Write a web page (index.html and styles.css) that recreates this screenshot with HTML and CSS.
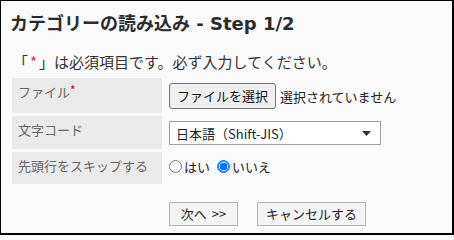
FILE: index.html
```html
<!DOCTYPE html>
<html lang="ja">
<head>
<meta charset="utf-8">
<link rel="stylesheet" href="styles.css">
</head>
<body>
<div class="frame">
  <h1 class="title">カテゴリーの読み込み<span class="latin"> - Step 1/2</span></h1>
  <p class="note">「<span class="req">*</span>」は必須項目です。必ず入力してください。</p>
  <div class="form">
    <div class="label">ファイル<span class="req-label">*</span></div>
    <div class="value">
      <span class="file-btn">ファイルを選択</span>
      <span class="file-status">選択されていません</span>
    </div>
    <div class="label">文字コード</div>
    <div class="value">
      <div class="select">
        <span>日本語（Shift-JIS）</span>
        <svg class="arrow" width="9" height="5" viewBox="0 0 9 5"><path d="M0 0H9L4.5 5Z" fill="#333"/></svg>
      </div>
    </div>
    <div class="label">先頭行をスキップする</div>
    <div class="value radios">
      <label class="radio-item"><span class="radio"></span>はい</label>
      <label class="radio-item"><span class="radio checked"></span>いいえ</label>
    </div>
  </div>
  <div class="actions">
    <span class="btn btn-next">次へ &gt;&gt;</span>
    <span class="btn btn-cancel">キャンセルする</span>
  </div>
</div>
</body>
</html>
```

FILE: styles.css
```css
* { box-sizing: border-box; }
html, body { margin: 0; padding: 0; background: #fafafa; }
body {
  font-family: "Noto Sans CJK JP", "Noto Sans", sans-serif;
  color: #333;
}
.frame {
  width: 454px;
  height: 235px;
  border: 1px solid #000;
  border-right-width: 2px;
  border-bottom-width: 2px;
  background: #fafafa;
  padding: 0 0 0 9px;
  overflow: hidden;
}
.title {
  margin: 8px 0 0 0;
  font-size: 18px;
  line-height: 26px;
  font-weight: bold;
  color: #2b2b2b;
}
.latin { font-family: "DejaVu Sans", "Noto Sans", sans-serif; }
.note {
  margin: 15px 0 0 3px;
  font-size: 15px;
  line-height: 20px;
  color: #333;
}
.req { color: #e0305a; padding: 0 2px; }
.req-label { color: #d9001b; font-size: 12px; vertical-align: top; line-height: 14px; }
.form {
  margin: 6px 0 0 2px;
  display: grid;
  grid-template-columns: 150px 1fr;
  grid-template-rows: 35px 33px 32px;
  column-gap: 2px;
  row-gap: 3px;
  font-size: 13px;
}
.label {
  background: #eaeaea;
  color: #666;
  padding: 5px 0 0 6px;
  line-height: 18px;
}
.value {
  display: flex;
  align-items: center;
  padding: 0 0 0 5px;
  color: #222;
}
.file-btn {
  display: inline-block;
  width: 107px;
  height: 26px;
  line-height: 24px;
  text-align: center;
  border: 1px solid #767676;
  border-radius: 3px;
  background: #efefef;
  color: #111;
  margin-top: 1px;
}
.file-status { margin-left: 4px; color: #222; margin-top: 1px; }
.select {
  width: 212px;
  height: 24px;
  border: 1px solid #a0a0a0;
  background: #fff;
  display: flex;
  align-items: center;
  justify-content: space-between;
  padding: 0 9px 0 6px;
  color: #222;
  margin-top: 1px;
}
.arrow { display: block; }
.radios { padding-bottom: 3px; }
.radio-item { display: inline-flex; align-items: center; margin-right: 7px; }
.radio {
  display: inline-block;
  width: 13px;
  height: 13px;
  border: 1px solid #767676;
  border-radius: 50%;
  background: #fff;
  margin-right: 2px;
}
.radio.checked {
  border: 1px solid #0075ff;
  background: radial-gradient(circle, #0075ff 0, #0075ff 3.6px, #fff 4px, #fff 100%);
  box-shadow: inset 0 0 0 1px #0075ff;
}
.actions {
  display: flex;
  gap: 19px;
  margin: 18px 0 0 159px;
}
.btn {
  display: inline-block;
  height: 24px;
  line-height: 22px;
  font-size: 13px;
  border: 1px solid #b3b3b3;
  background: #f4f4f4;
  color: #222;
  text-align: center;
}
.btn-next { width: 69px; word-spacing: 2px; }
.btn-cancel { width: 109px; }
```
